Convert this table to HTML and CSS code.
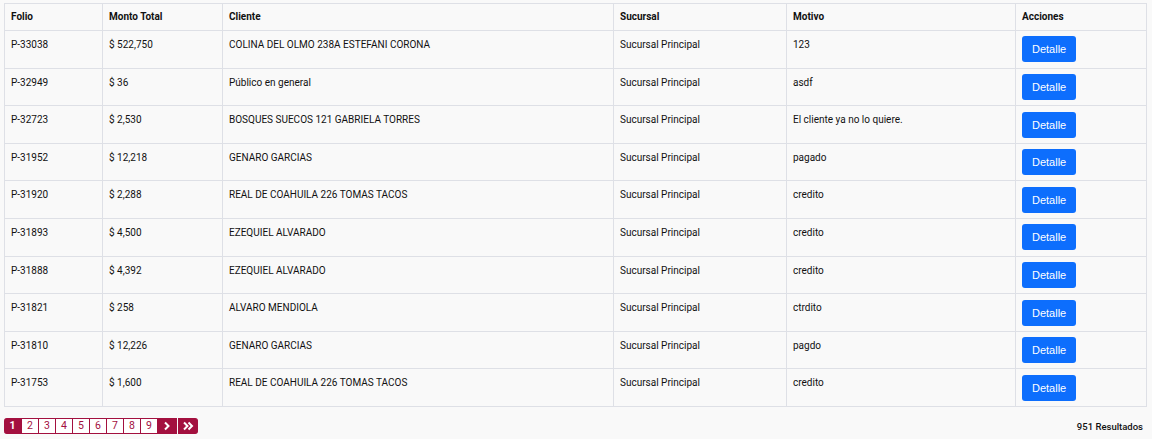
FILE: index.html
```html
<!DOCTYPE html>
<html lang="es">
<head>
  <meta charset="UTF-8" />
  <title>Devoluciones</title>
  <link rel="stylesheet" href="styles.css">
</head>
<body>
  <div class="wrap">
    <table class="grid">
      <thead>
        <tr>
          <th class="c-folio">Folio</th>
          <th class="c-monto">Monto Total</th>
          <th class="c-cliente">Cliente</th>
          <th class="c-suc">Sucursal</th>
          <th class="c-motivo">Motivo</th>
          <th>Acciones</th>
        </tr>
      </thead>
      <tbody>
        <tr><td>P-33038</td><td>$ 522,750</td><td>COLINA DEL OLMO 238A ESTEFANI CORONA</td><td>Sucursal Principal</td><td>123</td><td><button class="btn">Detalle</button></td></tr>
        <tr><td>P-32949</td><td>$ 36</td><td>Público en general</td><td>Sucursal Principal</td><td>asdf</td><td><button class="btn">Detalle</button></td></tr>
        <tr><td>P-32723</td><td>$ 2,530</td><td>BOSQUES SUECOS 121 GABRIELA TORRES</td><td>Sucursal Principal</td><td>El cliente ya no lo quiere.</td><td><button class="btn">Detalle</button></td></tr>
        <tr><td>P-31952</td><td>$ 12,218</td><td>GENARO GARCIAS</td><td>Sucursal Principal</td><td>pagado</td><td><button class="btn">Detalle</button></td></tr>
        <tr><td>P-31920</td><td>$ 2,288</td><td>REAL DE COAHUILA 226 TOMAS TACOS</td><td>Sucursal Principal</td><td>credito</td><td><button class="btn">Detalle</button></td></tr>
        <tr><td>P-31893</td><td>$ 4,500</td><td>EZEQUIEL ALVARADO</td><td>Sucursal Principal</td><td>credito</td><td><button class="btn">Detalle</button></td></tr>
        <tr><td>P-31888</td><td>$ 4,392</td><td>EZEQUIEL ALVARADO</td><td>Sucursal Principal</td><td>credito</td><td><button class="btn">Detalle</button></td></tr>
        <tr><td>P-31821</td><td>$ 258</td><td>ALVARO MENDIOLA</td><td>Sucursal Principal</td><td>ctrdito</td><td><button class="btn">Detalle</button></td></tr>
        <tr><td>P-31810</td><td>$ 12,226</td><td>GENARO GARCIAS</td><td>Sucursal Principal</td><td>pagdo</td><td><button class="btn">Detalle</button></td></tr>
        <tr><td>P-31753</td><td>$ 1,600</td><td>REAL DE COAHUILA 226 TOMAS TACOS</td><td>Sucursal Principal</td><td>credito</td><td><button class="btn">Detalle</button></td></tr>
      </tbody>
    </table>

    <div class="footer">
      <ul class="pager">
        <li class="active">1</li>
        <li>2</li>
        <li>3</li>
        <li>4</li>
        <li>5</li>
        <li>6</li>
        <li>7</li>
        <li>8</li>
        <li>9</li>
        <li class="nav">
          <svg width="8" height="10" viewBox="0 0 8 10"><path d="M2 1.5 L5.5 5 L2 8.5" fill="none" stroke="#fff" stroke-width="2"/></svg>
        </li>
        <li class="nav last">
          <svg width="12" height="10" viewBox="0 0 12 10"><path d="M2 1.5 L5.5 5 L2 8.5 M6.5 1.5 L10 5 L6.5 8.5" fill="none" stroke="#fff" stroke-width="2"/></svg>
        </li>
      </ul>
      <div class="total">951 Resultados</div>
    </div>
  </div>
</body>
</html>
```

FILE: styles.css
```css
body {
  margin: 0;
  background: #f9f9f9;
  font-family: Roboto, "Noto Sans", sans-serif;
  font-size: 10px;
  color: #111;
}
.wrap {
  padding: 3px 5px 0 4px;
}
.grid {
  width: 100%;
  border-collapse: collapse;
  background: #f9f9f9;
}
.grid th,
.grid td {
  border: 1px solid #dee0e6;
  padding: 5.3px 6px;
  text-align: left;
  vertical-align: top;
  line-height: 16px;
}
.grid td {
  padding-top: 6px;
}
.grid th {
  font-weight: 700;
  padding: 5px 6px 5px;
}
.c-folio { width: 85px; }
.c-monto { width: 107px; }
.c-cliente { width: 378px; }
.c-suc { width: 160px; }
.c-motivo { width: 216px; }
.btn {
  display: block;
  height: 26px;
  margin-top: -0.7px;
  padding: 0 10px;
  border: none;
  border-radius: 3px;
  background: #0d6efd;
  color: #fff;
  font-family: "Liberation Sans", Arial, sans-serif;
  font-size: 11px;
  cursor: pointer;
}
.footer {
  display: flex;
  justify-content: space-between;
  align-items: center;
  margin-top: 11px;
  padding-right: 4px;
}
.pager {
  display: flex;
  list-style: none;
  margin: 0;
  padding: 0;
}
.pager li {
  width: 16px;
  height: 14px;
  line-height: 14px;
  text-align: center;
  border: 1px solid #a3103f;
  border-left: none;
  background: #fff;
  color: #a3103f;
  font-size: 10.5px;
}
.pager li.active {
  width: 17px;
  background: #a3103f;
  color: #fff;
  font-weight: 700;
  border-radius: 3px 0 0 3px;
}
.pager li.nav {
  display: flex;
  align-items: center;
  justify-content: center;
  background: #a3103f;
  width: 18px;
}
.pager li.last {
  margin-left: 1px;
  width: 19px;
  border-radius: 0 3px 3px 0;
}
.total {
  font-size: 9.5px;
  font-weight: 500;
}
```
